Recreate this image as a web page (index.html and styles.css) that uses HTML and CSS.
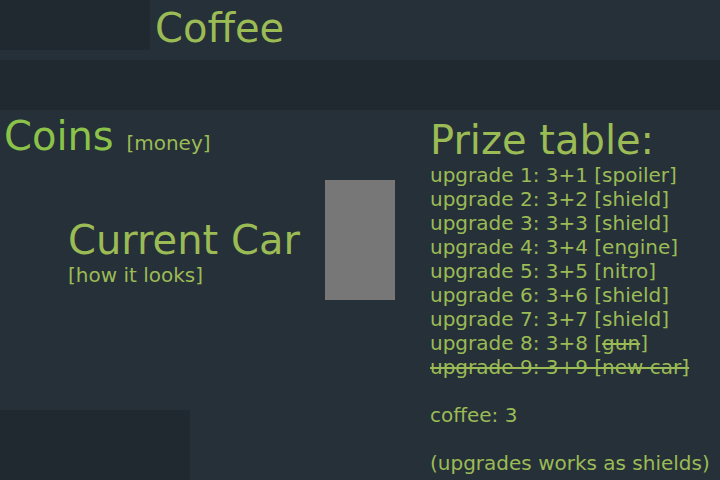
FILE: index.html
```html
<!DOCTYPE html>
<html>
<head>
<meta charset="utf-8">
<link rel="stylesheet" href="styles.css">
</head>
<body>
<div class="app">
  <header class="top">
    <div class="logo"></div>
    <h1 class="title">Coffee</h1>
  </header>
  <div class="bar"></div>
  <main class="main">
    <section class="left">
      <div class="coins"><span class="coins-label">Coins </span><span class="coins-note">[money]</span></div>
      <div class="car">
        <div class="car-text">
          <h2 class="car-title">Current Car</h2>
          <p class="car-note">[how it looks]</p>
        </div>
        <div class="car-img"></div>
      </div>
      <div class="foot-block"></div>
    </section>
    <section class="right">
      <h2 class="prize-title">Prize table:</h2>
      <ul class="prizes">
        <li>upgrade 1: 3+1 [spoiler]</li>
        <li>upgrade 2: 3+2 [shield]</li>
        <li>upgrade 3: 3+3 [shield]</li>
        <li>upgrade 4: 3+4 [engine]</li>
        <li>upgrade 5: 3+5 [nitro]</li>
        <li>upgrade 6: 3+6 [shield]</li>
        <li>upgrade 7: 3+7 [shield]</li>
        <li>upgrade 8: 3+8 [<s>gun</s>]</li>
        <li><s>upgrade 9: 3+9 [new car]</s></li>
        <li class="gap">coffee: 3</li>
        <li class="gap">(upgrades works as shields)</li>
      </ul>
    </section>
  </main>
</div>
</body>
</html>
```

FILE: styles.css
```css
html, body {
  margin: 0;
  padding: 0;
}
body {
  background: #263038;
  font-family: "DejaVu Sans", sans-serif;
  color: #9bbb55;
  width: 720px;
  height: 480px;
  overflow: hidden;
}
.app {
  display: flex;
  flex-direction: column;
  height: 480px;
}
.top {
  display: flex;
  height: 50px;
  gap: 5px;
}
.logo {
  width: 150px;
  height: 50px;
  background: #20292f;
}
.title {
  margin: 5px 0 0 0;
  font-size: 40px;
  font-weight: normal;
  line-height: normal;
}
.bar {
  margin-top: 10px;
  height: 50px;
  background: #20292f;
}
.main {
  flex: 1;
  display: grid;
  grid-template-columns: 430px 1fr;
}
.left {
  display: flex;
  flex-direction: column;
  padding: 3px 0 0 0;
}
.coins {
  padding-left: 4px;
  line-height: normal;
}
.coins-label {
  font-size: 40px;
  color: #8bc34a;
}
.coins-note {
  font-size: 20px;
}
.car {
  display: flex;
  align-items: flex-start;
  padding-left: 68px;
  margin-top: 21px;
  gap: 25px;
}
.car-text {
  margin-top: 37px;
}
.car-title {
  margin: 0;
  font-size: 40px;
  font-weight: normal;
  line-height: normal;
}
.car-note {
  margin: 0;
  font-size: 20px;
}
.car-img {
  width: 70px;
  height: 120px;
  background: #777777;
}
.foot-block {
  margin-top: auto;
  width: 190px;
  height: 70px;
  background: #20292f;
}
.right {
  padding-top: 7px;
}
.prize-title {
  margin: 0;
  font-size: 40px;
  font-weight: normal;
  line-height: normal;
}
.prizes {
  list-style: none;
  margin: 0;
  padding: 0;
  font-size: 20px;
  line-height: 24px;
}
.prizes .gap {
  margin-top: 24px;
}
```
